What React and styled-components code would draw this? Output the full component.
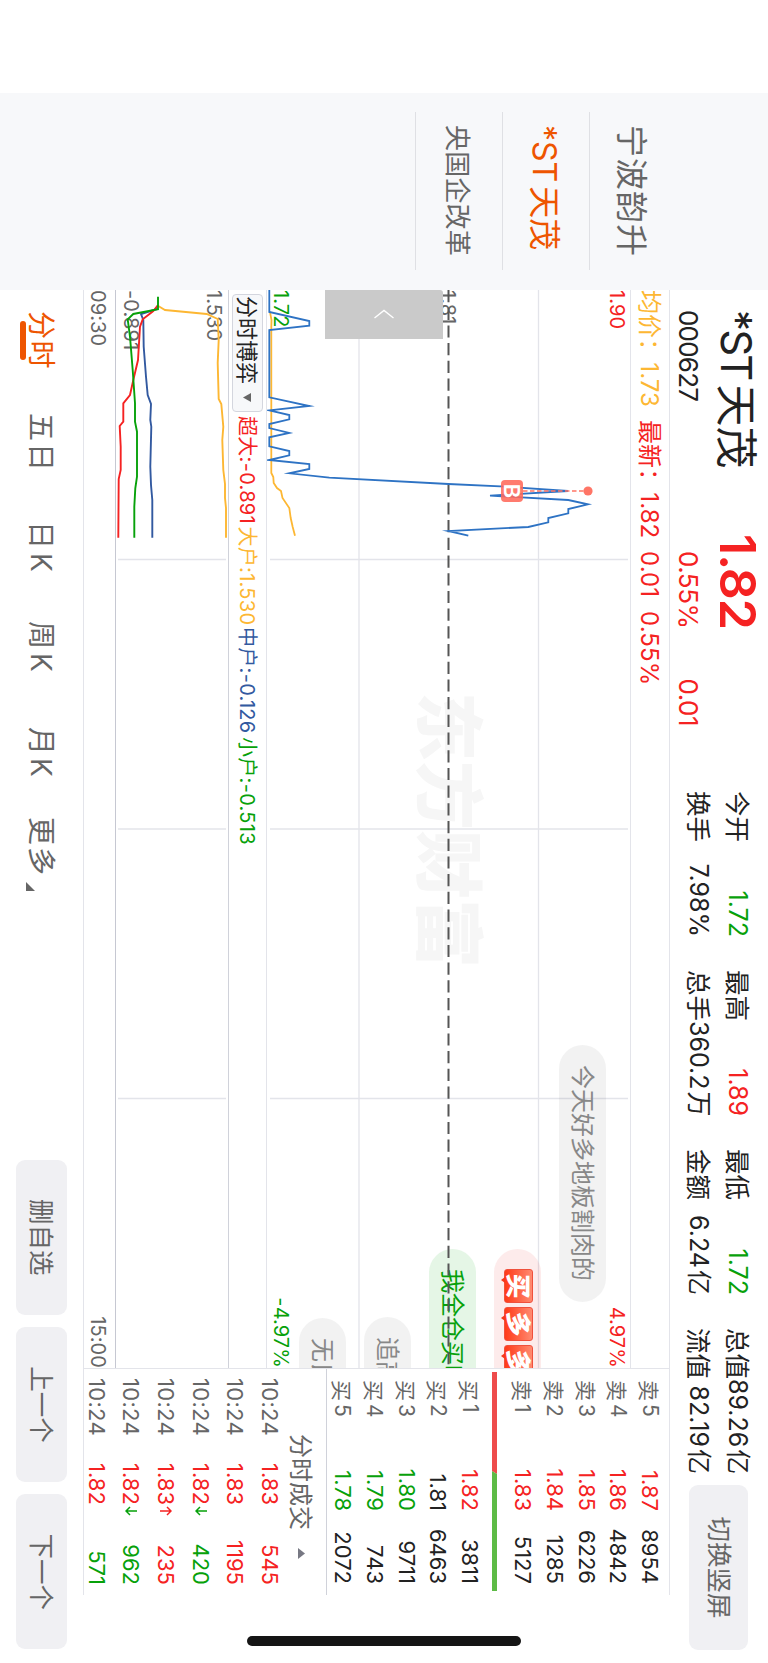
import styled, { createGlobalStyle } from "styled-components";

const RED = "#f52222";
const GREEN = "#07a10a";
const ORANGE = "#ee5500";
const YELLOW = "#fdb733";
const NAVY = "#3259a0";
const DARK = "#222222";
const GRAY = "#666666";
const LINE = "#e3e4ea";

const watchlist = [
    { name: "宁波韵升", size: 32, spacing: 1 },
    { prefix: "*ST", name: "天茂", size: 32, spacing: 0, active: true },
    { name: "央国企改革", size: 26, spacing: 0.2 },
];

const stats = [
    { label: "今开", value: "1.72", color: GREEN },
    { label: "最高", value: "1.89", color: RED },
    { label: "最低", value: "1.72", color: GREEN },
    { label: "总值", value: "89.26", unit: "亿" },
    { label: "换手", value: "7.98%" },
    { label: "总手", value: "360.2", unit: "万" },
    { label: "金额", value: "6.24", unit: "亿" },
    { label: "流值", value: "82.19", unit: "亿" },
];

const sells = [
    ["卖", 5, "1.87", "8954", RED],
    ["卖", 4, "1.86", "4842", RED],
    ["卖", 3, "1.85", "6226", RED],
    ["卖", 2, "1.84", "1285", RED],
    ["卖", 1, "1.83", "5127", RED],
];

const buys = [
    ["买", 1, "1.82", "3811", RED],
    ["买", 2, "1.81", "6463", DARK],
    ["买", 3, "1.80", "9711", GREEN],
    ["买", 4, "1.79", "743", GREEN],
    ["买", 5, "1.78", "2072", GREEN],
];

const ticks = [
    { price: "1.83", volume: "545", color: RED },
    { price: "1.83", volume: "1195", color: RED },
    { price: "1.82", volume: "420", color: GREEN, arrow: "down" },
    { price: "1.83", volume: "235", color: RED, arrow: "up" },
    { price: "1.82", volume: "962", color: GREEN, arrow: "down" },
    { price: "1.82", volume: "571", color: GREEN },
];

const periods = [
    { label: "分时", width: 102, spacing: 1.5, active: true },
    { label: "五日", width: 108, spacing: 2 },
    { label: "日K", width: 100, spacing: 4 },
    { label: "周K", width: 106, spacing: 4 },
    { label: "月K", width: 90, spacing: 3 },
    { label: "更多", width: 65, spacing: 2 },
];

const pricePoints =
    "290,498.7 312,498.7 321,458.7 325.7,458.7 330,498.7 397.3,498.7 406,458.7 410.3,498.7 415,478.7 419.3,478.7 424,498.7 428,498.7 433,478.7 437.3,498.7 446.3,498.7 451,478.7 455.3,478.7 460,498.7 464,458.7 469,458.7 473.3,478.7 477.7,438.7 484,319.7 486.7,262 491,200 495.7,278 500,199.7 504.3,180 509,199.7 513.3,199.7 518,219.7 522.3,219.7 527,239.7 531,319.7 535.7,299.7";
const averagePoints =
    "312,498 320,496.5 327,496.7 473,496.7 477,494.7 483,494.3 488,491 491,487 498,485.5 508,478.7 518,477.3 527,475.3 535.7,473";

const flows = [
    {
        color: NAVY,
        points: "309,611 314,627 320,624.7 346.7,624.3 376.7,622 395,620.3 404,617 420,617.7 426.7,616.7 466.7,617.7 485,617 500,615.7 537.7,615.7",
    },
    {
        color: YELLOW,
        points: "306,609.7 310,603 314,561.3 319,550.3 340,549.3 363,550.3 399,549.3 404,546.7 426.7,544.7 440,545.7 470,544.7 484,543 498,543 508,542 537.7,542",
    },
    {
        color: RED,
        points: "305,610 311,614.7 319.3,625.3 326.7,628 360,630 380,634.7 395,638 403.3,644.7 421.7,644.7 426,648.3 446.7,647.3 470,647.3 479,649.3 537.7,649.7",
    },
    {
        color: GREEN,
        points: "296.7,610 309.3,610 314,634.7 319.3,640.3 336.7,638 370,635.3 403.3,633 421.7,633 431.7,631 476.7,631 488.3,632.7 506.7,633.7 537.7,633.7",
    },
];

const gridColumns = [559.5, 829, 1098.5];

export default function App() {
    return (
        <>
            <GlobalStyle />
            <Viewport>
                <Screen>
                    <Sidebar>
                        {watchlist.map((item) => (
                            <WatchItem
                                key={item.name}
                                $size={item.size}
                                $spacing={item.spacing}
                                $active={item.active}
                            >
                                {item.prefix && <Prefix $gap={4}>{item.prefix}</Prefix>}
                                {item.name}
                            </WatchItem>
                        ))}
                    </Sidebar>
                    <Main>
                        <Header />
                        <Body>
                            <ChartColumn>
                                <InfoRow>
                                    <InfoText $color={YELLOW} $width={130}>均价：1.73</InfoText>
                                    <InfoText $color={RED} $width={131}>最新：1.82</InfoText>
                                    <InfoText $color={RED} $width={60}>0.01</InfoText>
                                    <InfoText $color={RED}>0.55%</InfoText>
                                </InfoRow>
                                <PriceChart />
                                <FlowRow>
                                    <FlowSelect>
                                        分时博弈
                                        <svg width="9" height="8" viewBox="0 0 9 8">
                                            <path d="M0 0h9L4.5 8z" fill={GRAY} />
                                        </svg>
                                    </FlowSelect>
                                    <FlowText $color={RED} $width={110.5}>超大:-0.891</FlowText>
                                    <FlowText $color={YELLOW} $width={100.5}>大户:1.530</FlowText>
                                    <FlowText $color={NAVY} $width={110}>中户:-0.126</FlowText>
                                    <FlowText $color={GREEN} $width={110}>小户:-0.513</FlowText>
                                </FlowRow>
                                <FlowChart />
                                <TimeRow>
                                    <span>09:30</span>
                                    <span>15:00</span>
                                </TimeRow>
                            </ChartColumn>
                            <QuotePanel />
                        </Body>
                        <Footer />
                    </Main>
                    <HomeIndicator />
                </Screen>
            </Viewport>
        </>
    );
}

function Header() {
    return (
        <HeaderBar>
            <Identity>
                <StockName>
                    <Prefix $gap={5} $spacing={-1.9}>*ST</Prefix>
                    天茂
                </StockName>
                <StockCode>000627</StockCode>
            </Identity>
            <Quote>
                <LastPrice>1.82</LastPrice>
                <Change>
                    <span>0.55%</span>
                    <span>0.01</span>
                </Change>
            </Quote>
            <Stats>
                {stats.map((stat) => (
                    <Stat key={stat.label} $color={stat.color}>
                        <span>{stat.label}</span>
                        <b>
                            {stat.value}
                            {stat.unit && <i>{stat.unit}</i>}
                        </b>
                    </Stat>
                ))}
            </Stats>
            <RotateButton>切换竖屏</RotateButton>
        </HeaderBar>
    );
}

function PriceChart() {
    return (
        <PricePlot>
            <Watermark>东方财富</Watermark>
            <PlotSvg viewBox="290 137 1078 364">
                <g stroke={LINE} strokeWidth="1.3">
                    <path d="M290 229.5H1368M290 409H1368" />
                    {gridColumns.map((x) => (
                        <path key={x} d={`M${x} 140V498`} />
                    ))}
                </g>
            </PlotSvg>
            <AxisLabel $top={2} $color={RED}>1.90</AxisLabel>
            <AxisLabel $top={171} $color={GRAY}>1.81</AxisLabel>
            <AxisLabel $top={338} $color={GREEN}>1.72</AxisLabel>
            <AxisLabel $top={2} $color={RED} $right>4.97%</AxisLabel>
            <AxisLabel $top={338} $color={GREEN} $right>-4.97%</AxisLabel>
            <Bullet $left={755} $top={24} $width={257}>今天好多地板割肉的</Bullet>
            <Bullet $left={959} $top={89} $tone="red">
                <BuyStamp char="买" />
                <BuyStamp char="多" />
                <BuyStamp char="多" />
            </Bullet>
            <Bullet $left={959} $top={154} $tone="green">我全仓买吧</Bullet>
            <Bullet $left={1027} $top={219}>追高</Bullet>
            <Bullet $left={1028} $top={284}>无良</Bullet>
            <PlotSvg viewBox="290 137 1078 364">
                <path d="M290 319.5H1368" stroke="#555" strokeWidth="2" strokeDasharray="12.2 5.5" />
                <polyline points={averagePoints} fill="none" stroke={YELLOW} strokeWidth="1.8" />
                <polyline
                    points={pricePoints}
                    fill="none"
                    stroke="#2e73c4"
                    strokeWidth="1.8"
                    strokeMiterlimit="10"
                />
                <path d="M491 245V184" stroke="#ff7566" strokeWidth="1.6" strokeDasharray="4.5 2.5" />
                <circle cx="491" cy="180" r="4.6" fill="#ff7566" />
            </PlotSvg>
            <BuyMark>B</BuyMark>
            <Collapse>
                <svg width="10" height="22" viewBox="0 0 10 22">
                    <path d="M9 1.5L1.5 11L9 20.5" fill="none" stroke="#fff" strokeWidth="1.4" />
                </svg>
            </Collapse>
        </PricePlot>
    );
}

function BuyStamp({ char }) {
    return (
        <Stamp>
            <span>{char}</span>
        </Stamp>
    );
}

function FlowChart() {
    return (
        <FlowPlot>
            <AxisLabel $top={3} $color={GRAY}>1.530</AxisLabel>
            <AxisLabel $top={86} $color={GRAY}>-0.891</AxisLabel>
            <PlotSvg viewBox="290 539 1078 113">
                {gridColumns.map((x) => (
                    <path key={x} d={`M${x} 542V650`} stroke={LINE} strokeWidth="1.3" />
                ))}
                {flows.map((flow) => (
                    <polyline key={flow.color} points={flow.points} fill="none" stroke={flow.color} strokeWidth="1.9" />
                ))}
            </PlotSvg>
        </FlowPlot>
    );
}

function BookRows({ rows }) {
    return rows.map(([side, level, price, volume, color]) => (
        <BookRow key={level} $color={color}>
            <span>{side}</span>
            <i>{level}</i>
            <em>{price}</em>
            <b>{volume}</b>
        </BookRow>
    ));
}

function QuotePanel() {
    return (
        <Panel>
            <Book>
                <BookRows rows={sells} />
                <RatioBar width="219" height="5" viewBox="0 0 219 5">
                    <path d="M0 0H102L99 5H0z" fill="#ee4b4b" />
                    <path d="M102 0H219V5H99z" fill="#5dbb46" />
                </RatioBar>
                <BookRows rows={buys} />
            </Book>
            <TickTitle>
                分时成交
                <svg width="11" height="7" viewBox="0 0 11 7">
                    <path d="M0 7h11L5.5 0z" fill="#777883" />
                </svg>
            </TickTitle>
            {ticks.map((tick, i) => (
                <TickRow key={i} $color={tick.color}>
                    <span>10:24</span>
                    <em>{tick.price}</em>
                    <svg width="10" height="12" viewBox="0 0 10 12">
                        {tick.arrow && (
                            <path
                                d={tick.arrow === "up" ? "M5 12V1M1 5L5 1L9 5" : "M5 0V11M1 7L5 11L9 7"}
                                fill="none"
                                stroke={tick.color}
                                strokeWidth="1.5"
                            />
                        )}
                    </svg>
                    <b>{tick.volume}</b>
                </TickRow>
            ))}
        </Panel>
    );
}

function Footer() {
    return (
        <FooterBar>
            <Periods>
                {periods.map((period) => (
                    <Period
                        key={period.label}
                        $width={period.width}
                        $spacing={period.spacing}
                        $active={period.active}
                    >
                        {period.label}
                    </Period>
                ))}
                <MoreCorner width="9" height="9" viewBox="0 0 9 9">
                    <path d="M9 0V9H0z" fill={GRAY} />
                </MoreCorner>
            </Periods>
            <FooterButton>删自选</FooterButton>
            <FooterButton>上一个</FooterButton>
            <FooterButton>下一个</FooterButton>
        </FooterBar>
    );
}

const GlobalStyle = createGlobalStyle`
    * {
        box-sizing: border-box;
    }

    body {
        margin: 0;
        background: #fff;
        font-family: Inter, "Noto Sans CJK SC", sans-serif;
    }

    b, em, i {
        font-weight: 400;
        font-style: normal;
    }

    svg {
        display: block;
        flex-shrink: 0;
    }
`;

const Viewport = styled.div`
    width: 768px;
    height: 1663px;
    overflow: hidden;
`;

/* landscape screen shown on a portrait device */
const Screen = styled.div`
    position: relative;
    display: flex;
    width: 1663px;
    height: 768px;
    padding-left: 93px;
    transform: translateX(768px) rotate(90deg);
    transform-origin: 0 0;
    color: ${DARK};
    white-space: nowrap;
`;

const Sidebar = styled.div`
    display: flex;
    flex-direction: column;
    width: 197px;
    padding: 92px 20px 0 19px;
    background: #f7f8fa;
`;

const WatchItem = styled.div`
    height: 87px;
    padding-left: 13px;
    border-bottom: 1px solid #dfe0e4;
    font-size: ${(p) => p.$size}px;
    line-height: 90px;
    letter-spacing: ${(p) => p.$spacing}px;
    color: ${(p) => (p.$active ? ORANGE : GRAY)};
`;

const Prefix = styled.span`
    margin-right: ${(p) => p.$gap}px;
    letter-spacing: ${(p) => p.$spacing || 0}px;
`;

const Main = styled.div`
    display: flex;
    flex-direction: column;
    flex: 1;
    min-width: 0;
`;

const HeaderBar = styled.div`
    display: flex;
    height: 98px;
    padding-left: 20px;
`;

const Identity = styled.div`
    width: 224px;
`;

const StockName = styled.div`
    height: 60px;
    font-size: 42px;
    line-height: 63px;
`;

const StockCode = styled.div`
    font-size: 26px;
    line-height: 39px;
    letter-spacing: -0.8px;
`;

const Quote = styled.div`
    width: 257px;
    color: ${RED};
`;

const LastPrice = styled.div`
    height: 60px;
    font-size: 50px;
    font-weight: 600;
    line-height: 60px;
    letter-spacing: -1px;
`;

const Change = styled.div`
    display: flex;
    gap: 50px;
    padding-left: 17px;
    font-size: 26px;
    line-height: 39px;
    letter-spacing: -0.5px;
`;

const Stats = styled.div`
    display: grid;
    grid-template-columns: repeat(4, 146px);
    grid-auto-rows: 39px;
    column-gap: 33px;
    padding-top: 11px;
`;

const Stat = styled.div`
    display: flex;
    justify-content: space-between;
    font-size: 25.5px;
    line-height: 39px;

    b {
        font-size: 25px;
        color: ${(p) => p.$color || DARK};
    }

    i {
        margin-left: 2px;
    }
`;

const RotateButton = styled.div`
    width: 165px;
    height: 59px;
    margin: 20px 0 0 11px;
    border-radius: 9px;
    background: #f0f0f3;
    color: ${GRAY};
    font-size: 25.5px;
    line-height: 58px;
    text-align: center;
`;

const Body = styled.div`
    display: flex;
    height: 587px;
`;

const ChartColumn = styled.div`
    width: 1078px;
`;

const InfoRow = styled.div`
    display: flex;
    height: 39px;
    border-top: 1px solid ${LINE};
`;

const InfoText = styled.span`
    width: ${(p) => (p.$width ? `${p.$width}px` : "auto")};
    font-size: 24px;
    line-height: 39px;
    letter-spacing: 0.1px;
    color: ${(p) => p.$color};
`;

const PricePlot = styled.div`
    position: relative;
    height: 364px;
    border-top: 1px solid ${LINE};
    overflow: hidden;
`;

const PlotSvg = styled.svg`
    position: absolute;
    top: -1px;
    left: 0;
    width: 1078px;
`;

const Watermark = styled.div`
    position: absolute;
    top: 132px;
    left: 402px;
    font-size: 69px;
    font-weight: 900;
    line-height: 100px;
    color: #f6f6f6;
`;

const AxisLabel = styled.span`
    position: absolute;
    top: ${(p) => p.$top}px;
    ${(p) => (p.$right ? "right: 0;" : "left: 0;")}
    font-size: 20px;
    line-height: 22px;
    letter-spacing: 0.1px;
    color: ${(p) => p.$color};
`;

const bulletTones = {
    red: { background: "rgba(240, 60, 60, 0.1)", color: RED },
    green: { background: "rgba(20, 170, 30, 0.11)", color: GREEN },
};

const Bullet = styled.div`
    position: absolute;
    top: ${(p) => p.$top}px;
    left: ${(p) => p.$left}px;
    display: flex;
    align-items: center;
    gap: 4px;
    width: ${(p) => p.$width || 300}px;
    height: 47px;
    padding-left: 20px;
    border-radius: 24px;
    font-size: 24px;
    line-height: 47px;
    background: ${(p) => bulletTones[p.$tone]?.background || "rgba(0, 0, 0, 0.05)"};
    color: ${(p) => bulletTones[p.$tone]?.color || "#888"};
`;

const Stamp = styled.div`
    position: relative;
    width: 34px;
    height: 29px;
    margin-top: -3px;
    border: 1px solid #f0503c;
    border-radius: 3px;
    background: linear-gradient(#ff8a70, #ff3a18);

    span {
        display: block;
        color: #fff;
        font-size: 25px;
        font-weight: 900;
        line-height: 28px;
        text-align: center;
    }

    &::after {
        content: "";
        position: absolute;
        top: 27px;
        left: 7px;
        border: 3px solid transparent;
        border-top: 4px solid #f5381c;
    }
`;

const BuyMark = styled.div`
    position: absolute;
    top: 107px;
    left: 190px;
    width: 22px;
    height: 22px;
    border-radius: 4px;
    background: rgba(255, 105, 90, 0.88);
    color: #fff;
    font-size: 22px;
    font-weight: 600;
    line-height: 22px;
    text-align: center;
`;

const Collapse = styled.div`
    position: absolute;
    top: 187px;
    left: 0;
    display: flex;
    align-items: center;
    width: 49px;
    height: 118px;
    padding-left: 19px;
    border-radius: 3px 0 0 0;
    background: #cacaca;
`;

const FlowRow = styled.div`
    display: flex;
    height: 38px;
    padding: 3px 0 0 4px;
    border-top: 1px solid ${LINE};
`;

const FlowSelect = styled.div`
    display: flex;
    align-items: center;
    justify-content: space-between;
    width: 118px;
    height: 31px;
    margin-right: 4px;
    padding: 0 9px 0 1px;
    border: 1px solid #d4d6de;
    border-radius: 4px;
    background: #f7f8fa;
    font-size: 22px;
    line-height: 28px;
`;

const FlowText = styled.span`
    width: ${(p) => p.$width}px;
    font-size: 20px;
    line-height: 32px;
    letter-spacing: 0.3px;
    color: ${(p) => p.$color};
`;

const FlowPlot = styled.div`
    position: relative;
    height: 113px;
    border-top: 1px solid #d0d2da;
`;

const TimeRow = styled.div`
    display: flex;
    justify-content: space-between;
    height: 33px;
    border-top: 1px solid #c6c8d2;
    border-bottom: 1px solid ${LINE};
    font-size: 20px;
    line-height: 34px;
    letter-spacing: 0.1px;
    color: ${GRAY};
`;

const Panel = styled.div`
    width: 227px;
    border: 1px solid ${LINE};
    border-right: 0;
`;

const Book = styled.div`
    height: 343px;
    padding: 3px 0 0 3px;
    border-bottom: 1px solid #d0d2da;
`;

const BookRow = styled.div`
    display: flex;
    align-items: center;
    height: 31.8px;
    padding-left: 8px;
    font-size: 22px;

    span {
        width: 24px;
        font-size: 21px;
        color: ${GRAY};
    }

    i {
        width: 26px;
        font-size: 21px;
        color: ${GRAY};
    }

    em {
        width: 81px;
        color: ${(p) => p.$color};
        text-align: right;
    }

    b {
        width: 73px;
        text-align: right;
    }
`;

const RatioBar = styled.svg`
    margin: 10px 0 6px;
`;

const TickTitle = styled.div`
    display: flex;
    align-items: center;
    gap: 18px;
    height: 39px;
    padding: 7px 0 0 65px;
    font-size: 24px;
    color: ${GRAY};

    svg {
        margin-top: 2px;
    }
`;

const TickRow = styled.div`
    display: flex;
    align-items: center;
    height: 34.6px;
    padding-left: 9px;
    font-size: 22px;
    color: ${(p) => p.$color};

    span {
        width: 85px;
        letter-spacing: 0.3px;
        color: ${GRAY};
    }

    em {
        width: 43px;
        color: ${RED};
    }

    b {
        width: 69px;
        text-align: right;
    }
`;

const FooterBar = styled.div`
    display: flex;
    gap: 12px;
    padding: 16px 0 0 21px;
`;

const Periods = styled.div`
    display: flex;
    width: 836.5px;
`;

const Period = styled.div`
    position: relative;
    width: ${(p) => p.$width}px;
    font-size: 28px;
    line-height: 53px;
    letter-spacing: ${(p) => p.$spacing}px;
    color: ${(p) => (p.$active ? ORANGE : GRAY)};

    &::after {
        content: "";
        position: absolute;
        top: 41px;
        left: 10px;
        width: ${(p) => (p.$active ? 39 : 0)}px;
        height: 6px;
        border-radius: 3px;
        background: ${ORANGE};
    }
`;

const MoreCorner = styled.svg`
    margin-top: 32px;
`;

const FooterButton = styled.div`
    width: 155.3px;
    height: 51px;
    border-radius: 9px;
    background: #f0f0f3;
    color: ${GRAY};
    font-size: 25.5px;
    line-height: 51px;
    text-align: center;
`;

const HomeIndicator = styled.div`
    position: absolute;
    top: 247px;
    left: 1636px;
    width: 10px;
    height: 274px;
    border-radius: 5px;
    background: #151515;
`;
